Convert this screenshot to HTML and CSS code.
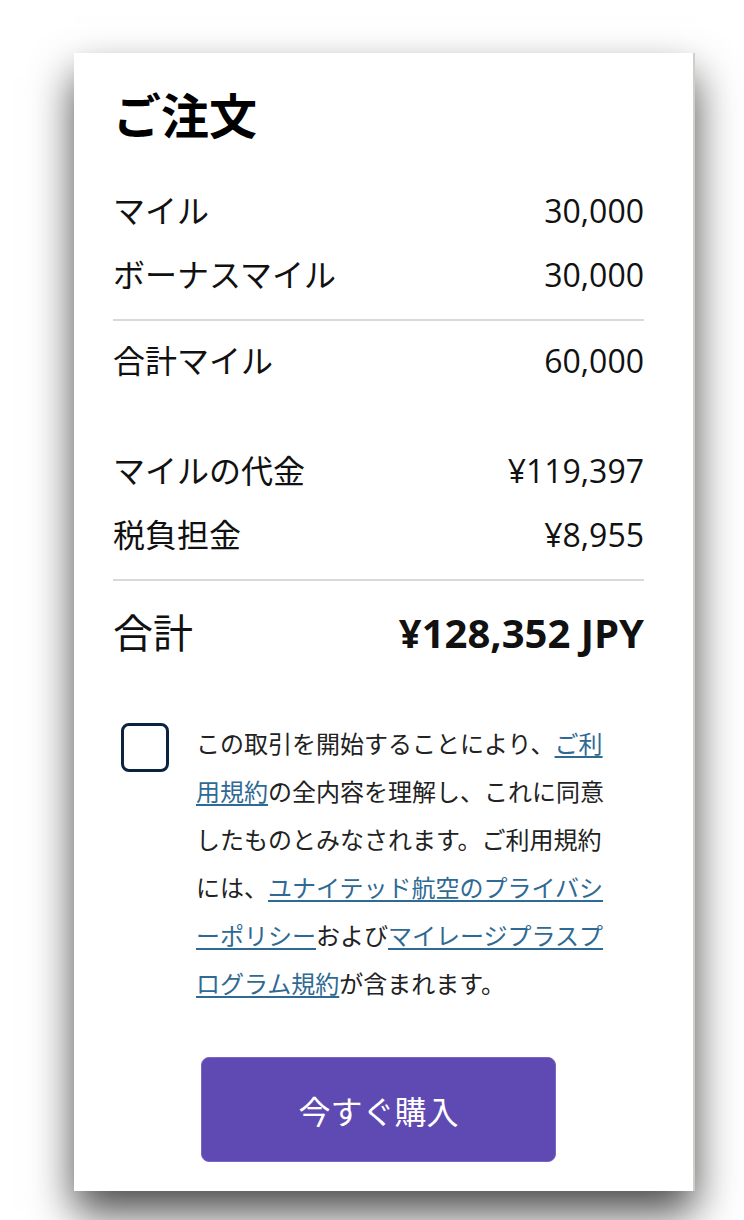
FILE: index.html
```html
<!DOCTYPE html>
<html lang="ja">
<head>
<meta charset="utf-8">
<link rel="stylesheet" href="styles.css">
</head>
<body>
<div class="page">
  <div class="card">
    <h1 class="title">ご注文</h1>

    <div class="group first">
      <div class="row"><span>マイル</span><span>30,000</span></div>
      <div class="row"><span>ボーナスマイル</span><span>30,000</span></div>
    </div>
    <div class="divider"></div>
    <div class="row"><span>合計マイル</span><span>60,000</span></div>

    <div class="group second">
      <div class="row"><span>マイルの代金</span><span>¥119,397</span></div>
      <div class="row"><span>税負担金</span><span>¥8,955</span></div>
    </div>
    <div class="divider"></div>
    <div class="row total"><span>合計</span><span class="amount">¥128,352 JPY</span></div>

    <div class="terms">
      <span class="checkbox"></span>
      <p class="termsText">この取引を開始することにより、<a href="#">ご利用規約</a>の全内容を理解し、これに同意したものとみなされます。ご利用規約には、<a href="#">ユナイテッド航空のプライバシーポリシー</a>および<a href="#">マイレージプラスプログラム規約</a>が含まれます。</p>
    </div>

    <div class="actions">
      <button class="buyButton" type="button">今すぐ購入</button>
    </div>
  </div>
</div>
</body>
</html>
```

FILE: styles.css
```css
body {
  margin: 0;
  background-color: #ffffff;
  font-family: "Open Sans", "Noto Sans CJK JP", sans-serif;
  color: #111111;
}

.page {
  padding: 53px 0 0 74px;
  height: 1167px;
  overflow: hidden;
}

.card {
  box-sizing: border-box;
  width: 621px;
  padding: 35px 49px 29px 39px;
  background-color: #ffffff;
  border-right: 2px solid #cfcfca;
  box-shadow: 0 22px 40px rgba(0, 0, 0, 0.7);
}

.title {
  margin: 0;
  font-size: 48px;
  line-height: 56px;
  font-weight: 700;
  color: #000000;
}

.group {
  display: flex;
  flex-direction: column;
  gap: 20px;
}

.group.first {
  margin-top: 45px;
}

.group.second {
  margin-top: 66px;
}

.row {
  display: flex;
  justify-content: space-between;
  font-size: 32px;
  line-height: 44px;
}

.divider {
  height: 2px;
  background-color: #d9d9d6;
  margin: 22px 0 18px 0;
}

.group.second + .divider {
  margin-bottom: 27px;
}

.row.total {
  font-size: 40px;
  line-height: 50px;
}

.amount {
  font-weight: 700;
}

.terms {
  display: flex;
  align-items: flex-start;
  margin-top: 62px;
  padding-left: 8px;
}

.checkbox {
  flex: none;
  width: 42px;
  height: 43px;
  margin-top: 3px;
  border: 3px solid #0c2340;
  border-radius: 8px;
}

.termsText {
  width: 414px;
  margin: 0 0 0 27px;
  font-size: 24px;
  line-height: 48px;
  color: #222222;
  line-break: loose;
}

.termsText a {
  color: #2f6a94;
  text-decoration: underline;
  text-underline-offset: 3px;
}

.actions {
  display: flex;
  justify-content: center;
  margin-top: 49px;
}

.buyButton {
  width: 355px;
  height: 105px;
  background-color: #5f4ab3;
  border: 1px solid #7766c2;
  border-radius: 8px;
  color: #ffffff;
  font-family: "Open Sans", "Noto Sans CJK JP", sans-serif;
  font-size: 32px;
  cursor: pointer;
}
```
